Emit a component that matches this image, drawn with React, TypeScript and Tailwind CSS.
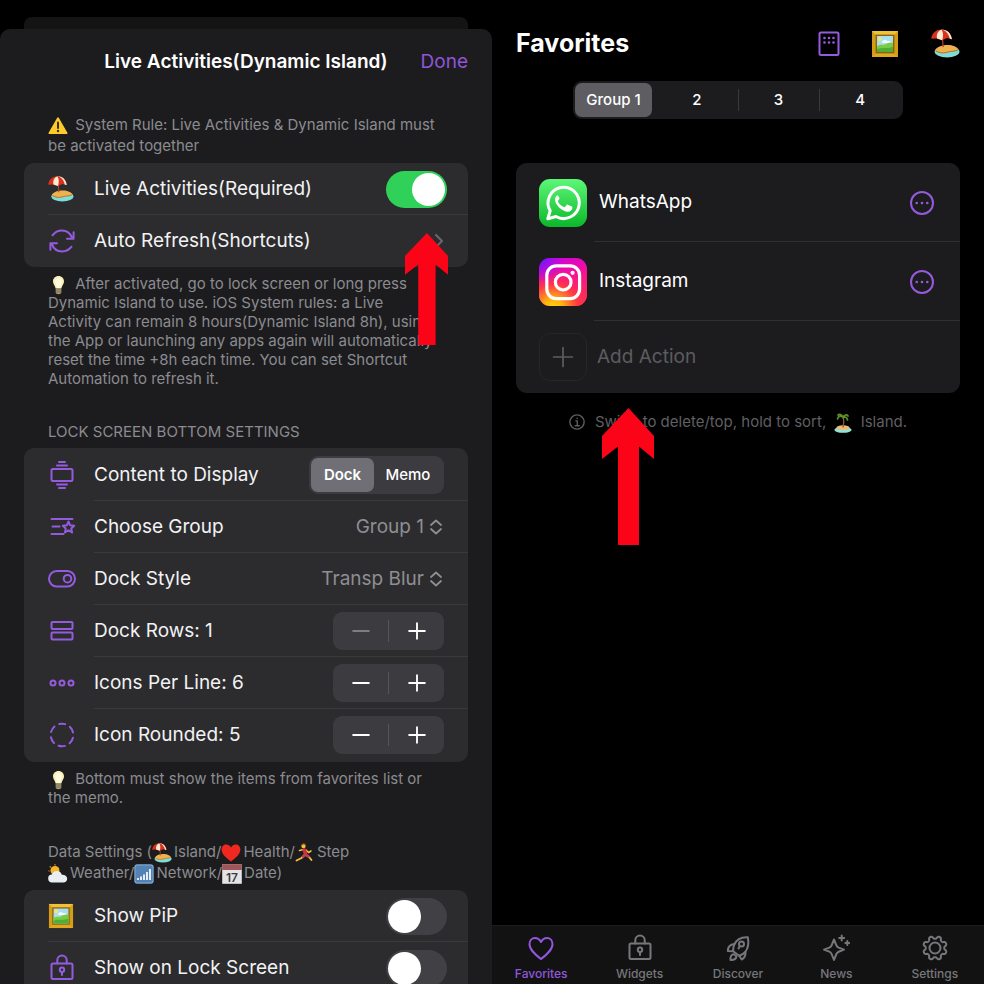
import React from "react";

type IconProps = { className?: string };

function Line({ className = "size-7", width = 2, children }: IconProps & { width?: number; children: React.ReactNode }) {
  return (
    <svg
      viewBox="0 0 28 28"
      className={`${className} shrink-0`}
      fill="none"
      stroke="currentColor"
      strokeWidth={width}
      strokeLinecap="round"
      strokeLinejoin="round"
      aria-hidden="true"
    >
      {children}
    </svg>
  );
}

/* ---------- emoji drawings ---------- */

const inlineEmoji = "-my-1 inline-block size-5";

function BeachEmoji({ className = "size-[26px]" }: IconProps) {
  return (
    <svg viewBox="0 0 28 28" className={`${className} shrink-0`} aria-hidden="true">
      <ellipse cx="15.5" cy="22" rx="12" ry="5.4" fill="#7fdcd6" />
      <path d="M4 20.5c2-3.5 7-5 12-5s9.500 2 10.500 4.500c-3 2.500-7 1.500-10.500 3-4 1.200-9 .5-12-2.500Z" fill="#efb14e" />
      <path d="M4.500 21c4 2.500 8 2.500 12 1.200 3-1 6.500-.3 9.500-2" fill="none" stroke="#8a5a2b" strokeWidth=".7" />
      <path d="m10.500 2 1.200 15.500" stroke="#b0402c" strokeWidth="1.200" />
      <path d="M.3 9.300C.8 3.600 5.200.4 10.200.4S19.400 4 20.200 9.800l-4.700-1.200-4.700 2.200-5-1.700Z" fill="#d9301f" />
      <path d="M10.200.4C6.500 2 5 5 5.800 9.100l5 1.700C12 7 12 3.500 10.200.4Z" fill="#fbead0" />
      <path d="M10.200.4c4.300 1.100 6.800 4.100 8 8.900l2 .5C19.400 4 15.500.4 10.200.4Z" fill="#fbead0" />
    </svg>
  );
}

function PictureEmoji({ className = "size-[26px]" }: IconProps) {
  return (
    <svg viewBox="0 0 28 28" className={`${className} shrink-0`} aria-hidden="true">
      <rect x="1" y="1" width="26" height="26" fill="#d59d16" />
      <path d="M1 1 5.500 5.500h17L27 1Z" fill="#f0c23a" />
      <path d="m27 27-4.500-4.500h-17L1 27Z" fill="#e0a81f" />
      <rect x="4.600" y="4.600" width="18.800" height="18.800" fill="#8c6212" />
      <rect x="6" y="6" width="16" height="16" fill="#a7dff0" />
      <circle cx="8.800" cy="9" r="2" fill="#f6e36a" />
      <path d="M11 12c1-2.500 4-3 5-1 2-.8 4 0 4.500 2H11Z" fill="#eefafc" />
      <path d="M6 16c4-2.500 6-.5 8-1.500s5-3 8-1.500v9H6Z" fill="#7ccb45" />
      <path d="M6 19c5-2 10 0 16-2v5H6Z" fill="#4fae33" />
    </svg>
  );
}

function WarningEmoji() {
  return (
    <svg viewBox="0 0 20 20" className={`${inlineEmoji} mr-[3px]`} aria-hidden="true">
      <path d="M10 2.200 18.600 17.200H1.400Z" fill="#fccb2b" stroke="#fccb2b" strokeWidth="1.800" strokeLinejoin="round" />
      <path d="M10 6.500v5.500" stroke="#3b2d08" strokeWidth="2" strokeLinecap="round" />
      <circle cx="10" cy="15" r="1.200" fill="#3b2d08" />
    </svg>
  );
}

function BulbEmoji() {
  return (
    <svg viewBox="0 0 20 20" className={`${inlineEmoji} mr-[3px]`} aria-hidden="true">
      <path d="M10.500 1c3.300 0 5.500 2.400 5.500 5.500 0 2.600-2 4-2.700 7H7.700C7 10.500 5 9.100 5 6.500 5 3.400 7.200 1 10.500 1Z" fill="#fbf0b4" />
      <path d="M10.500 3c2 0 3.300 1.500 3.300 3.500S12.500 9.500 12 13H9c-.5-3.500-1.800-4.500-1.800-6.500S8.500 3 10.500 3Z" fill="#fffbe2" />
      <path d="M7.700 13.500h5.600v3.700c0 1.300-1 2-2.800 2s-2.800-.7-2.800-2Z" fill="#a79a72" />
      <path d="M7.700 15h5.600M7.700 17h5.600" stroke="#6e664c" strokeWidth=".7" />
    </svg>
  );
}

function HeartEmoji() {
  return (
    <svg viewBox="0 0 20 20" className={`${inlineEmoji} mr-0.5`} aria-hidden="true">
      <path d="M10 18.500C6 15.500.6 11.500.6 6.600.6 3.600 2.700 1.500 5.200 1.500c2 0 3.700 1 4.800 3 1.100-2 2.800-3 4.800-3 2.500 0 4.600 2.100 4.600 5.100 0 4.900-5.400 8.900-9.400 11.900Z" fill="#f0281f" />
    </svg>
  );
}

function RunnerEmoji() {
  return (
    <svg viewBox="0 0 20 20" className={`${inlineEmoji} mr-0.5`} fill="none" strokeLinecap="round" strokeLinejoin="round" aria-hidden="true">
      <circle cx="8.500" cy="3" r="2.200" fill="#f3c13a" />
      <path d="M7 1.500c.8-1.200 3-1.200 3.500.2" stroke="#6b3b17" strokeWidth="1.200" />
      <path d="M9.500 12 6.500 15 1.500 17.500M11 12l3.500 2.500 2 2.500" stroke="#f3c13a" strokeWidth="1.800" />
      <path d="M8.500 6.500 4.500 7.500M11 7l2.500 2.500L16 8" stroke="#f3c13a" strokeWidth="1.500" />
      <path d="m9.300 7 1 3.200" stroke="#d12f3c" strokeWidth="3.600" />
      <path d="m10 12-2 1.800M11.500 12l2 1.500" stroke="#c43a55" strokeWidth="2.400" />
    </svg>
  );
}

function WeatherEmoji() {
  return (
    <svg viewBox="0 0 20 20" className={`${inlineEmoji} mr-0.5`} aria-hidden="true">
      <circle cx="7" cy="6.500" r="4.500" fill="#f8b52a" />
      <path d="M7 .3v1.200M1.800 2.500l.9.900M.5 7h1" stroke="#f8b52a" strokeWidth="1.100" />
      <path d="M4.500 18.500a4 4 0 0 1-.6-8c.8-2.200 2.600-3.500 4.900-3.500 2.600 0 4.500 1.600 5 3.700 3 0 5.400 1.500 5.400 4.100 0 2.200-1.700 3.700-4 3.700Z" fill="#e9eef3" />
    </svg>
  );
}

function SignalEmoji() {
  return (
    <svg viewBox="0 0 20 20" className={`${inlineEmoji} mr-0.5`} aria-hidden="true">
      <rect x=".3" y=".3" width="19.400" height="19.400" rx="3" fill="#7ea6cd" />
      <rect x="1.500" y="1.500" width="17" height="17" rx="2" fill="#5383b5" />
      <path d="M4 16v-2M7 16v-3.500M10 16v-5.500M13 16V8M16 16V5" stroke="#fff" strokeWidth="1.700" />
    </svg>
  );
}

function CalendarEmoji() {
  return (
    <svg viewBox="0 0 20 20" className={`${inlineEmoji} mr-0.5`} aria-hidden="true">
      <rect x=".2" y=".2" width="19.600" height="19.600" fill="#e4e4e6" />
      <rect x=".2" y=".2" width="19.600" height="5.800" fill="#a05559" />
      <text x="10" y="17.500" textAnchor="middle" fontSize="12" fontFamily="Inter, sans-serif" fontWeight="600" fill="#3c3c3e">17</text>
    </svg>
  );
}

function IslandEmoji() {
  return (
    <svg viewBox="0 0 20 20" className={`${inlineEmoji} mx-[3px]`} aria-hidden="true">
      <ellipse cx="10" cy="16.800" rx="8.600" ry="3" fill="#8fe3dc" />
      <ellipse cx="10" cy="14.800" rx="6.600" ry="2.500" fill="#eebb74" />
      <path d="M10.300 4c.8 3.500.6 7-.3 10.500" fill="none" stroke="#8b5a33" strokeWidth="1.300" />
      <path d="M10 4.500C8 2.500 5.500 2.500 4.500 6M10 4C8.500 1.300 6.500 1 5 2M10 4c1.500-2.500 4-2.500 5-1M10 4.500c2-1 4-.5 4.500 2.500" fill="none" stroke="#5f8f26" strokeWidth="1.700" strokeLinecap="round" />
    </svg>
  );
}

/* ---------- line icons ---------- */

const RefreshIcon = () => (
  <Line>
    <path d="M4.500 8.300C7 5 10.300 3.500 14 3.500c4.500 0 8.300 2.700 10.300 7.500M25.600 5.200v6.600h-6.600" />
    <path d="M23.500 19.700c-2.500 3.300-5.800 4.800-9.500 4.800-4.500 0-8.300-2.700-10.300-7.500M2.400 22.800v-6.600H9" />
  </Line>
);
const DisplayIcon = () => (
  <Line>
    <rect x="3.500" y="8" width="21" height="12" rx="1.500" />
    <path d="M11 1h6M9 4.600h10M9 23.400h10M11 27h6" />
  </Line>
);
const ListStarIcon = () => (
  <Line>
    <path d="M3.500 6h21M4.500 13.500h7M3.500 21h12" />
    <path d="m20.500 8.500 1.700 3.800 4 .4-3 2.700.9 4-3.600-2.100-3.600 2.100.9-4-3-2.700 4-.4Z" />
  </Line>
);
const ToggleIcon = () => (
  <Line>
    <rect x="1" y="6" width="26" height="15.500" rx="7.750" />
    <circle cx="19.500" cy="13.700" r="3.800" />
  </Line>
);
const RowsIcon = () => (
  <Line>
    <rect x="3.500" y="5" width="21" height="7" rx="1" />
    <rect x="3.500" y="15.500" width="21" height="7" rx="1" />
  </Line>
);
const DotsIcon = () => (
  <Line>
    <circle cx="5" cy="14" r="2.500" />
    <circle cx="14" cy="14" r="2.500" />
    <circle cx="23" cy="14" r="2.500" />
  </Line>
);
const DashedIcon = () => (
  <Line>
    <circle cx="14" cy="14" r="11.300" strokeDasharray="6.500 5.330" strokeDashoffset="3.250" transform="rotate(-90 14 14)" />
  </Line>
);
const LockIcon = () => (
  <Line>
    <rect x="3.500" y="9.500" width="21" height="15.500" rx="1.500" />
    <path d="M9.300 9.500V6.200a4.700 4.700 0 0 1 9.400 0v3.300M14 18v3" />
    <circle cx="14" cy="15.700" r="2.200" />
  </Line>
);
const KeypadIcon = () => (
  <Line>
    <rect x="4.500" y="2.500" width="19" height="22.500" rx="1.500" />
    <g fill="currentColor" stroke="none">
      <circle cx="9.500" cy="8" r="1.300" />
      <circle cx="14" cy="8" r="1.300" />
      <circle cx="18.500" cy="8" r="1.300" />
      <circle cx="9.500" cy="12.500" r="1.300" />
      <circle cx="14" cy="12.500" r="1.300" />
      <circle cx="18.500" cy="12.500" r="1.300" />
    </g>
  </Line>
);
const MoreIcon = () => (
  <Line>
    <circle cx="14" cy="14" r="11" />
    <g fill="currentColor" stroke="none">
      <circle cx="8.700" cy="14" r="1.300" />
      <circle cx="14" cy="14" r="1.300" />
      <circle cx="19.300" cy="14" r="1.300" />
    </g>
  </Line>
);
const HeartIcon = () => (
  <Line>
    <path d="M14 25C9 21 2.500 16 2.500 10.200 2.500 6.500 5 4 8 4c2.500 0 4.700 1.500 6 4 1.300-2.500 3.500-4 6-4 3 0 5.500 2.500 5.500 6.200C25.500 16 19 21 14 25Z" />
  </Line>
);
const RocketIcon = () => (
  <Line>
    <path d="M23.800 3.200C17.500 2.800 12.500 5.500 10.300 10.500 9.300 13 9 15.500 9.200 17.300l6 4.400c2-.4 4.300-1.700 6-3.700 3-3.800 3.800-8.800 2.600-14.800Z" />
    <path d="M10.500 10C6.500 10.500 3.800 13 3.800 17l5.400.3M21.500 18c.2 3.500-1 6-3.800 7.500l-2.500-3.800" />
    <path d="M10 20.300c-2.700.2-4 2.200-3.400 5.700 3.400.2 5.400-1 5.900-3.800Z" />
    <circle cx="17.500" cy="10" r="2.500" />
    <path d="m15.800 12-1.300 2.500" />
  </Line>
);
const SparkleIcon = () => (
  <Line>
    <path d="m12 5.500 2.400 5.800c.5 1.200 1.100 1.800 2.300 2.300l5.300 2-5.300 2.100c-1.200.5-1.800 1.100-2.300 2.300L12 26l-2.400-6c-.5-1.200-1.100-1.800-2.300-2.300L2 15.600l5.300-2c1.200-.5 1.800-1.100 2.300-2.300Z" />
    <path d="M19.700 1.500v5M17.200 4h5M25.300 7v4M23.300 9h4" />
  </Line>
);

const gearPath =
  Array.from({ length: 128 }, (_, i) => {
    const angle = (i / 128) * Math.PI * 2;
    const radius = 10.6 + 1.4 * Math.tanh(1.8 * Math.cos(8 * angle + Math.PI));
    const x = (14 + radius * Math.sin(angle)).toFixed(2);
    const y = (14 - radius * Math.cos(angle)).toFixed(2);
    return `${i === 0 ? "M" : "L"}${x} ${y}`;
  }).join("") + "Z";

const GearIcon = () => (
  <Line>
    <path d={gearPath} />
    <circle cx="14" cy="14" r="5.500" />
  </Line>
);

/* ---------- app logos ---------- */

function WhatsAppLogo() {
  return (
    <svg viewBox="0 0 48 48" className="size-12 shrink-0" aria-hidden="true">
      <defs>
        <linearGradient id="wa" x1="0" y1="0" x2="0" y2="1">
          <stop offset="0" stopColor="#5df777" />
          <stop offset="1" stopColor="#0bb82a" />
        </linearGradient>
      </defs>
      <rect width="48" height="48" rx="11" fill="url(#wa)" />
      <path d="M8.800 39.800 11.200 31.800A15.600 15.600 0 1 1 17 37.500Z" fill="none" stroke="#fff" strokeWidth="3" strokeLinejoin="round" />
      <path d="M18.700 16.200c-.8 0-2.700 1.500-2.700 4.300 0 5.500 7.500 12.200 12.800 12.200 2.700 0 4.600-1.700 4.600-4 0-.7-.1-.9-.6-1.100l-4-1.900c-.6-.2-.9-.1-1.300.4l-1.300 1.700c-.4.400-.8.500-1.400.2-2.700-1.200-4.500-3-5.800-5.300-.3-.5-.2-.9.200-1.300l1.100-1.300c.3-.4.300-.8.100-1.200l-1.300-2.100c-.2-.4-.3-.6-.4-.6Z" fill="#fff" />
    </svg>
  );
}

function InstagramLogo() {
  return (
    <svg viewBox="0 0 48 48" className="size-12 shrink-0" aria-hidden="true">
      <defs>
        <linearGradient id="igBase" x1="0" y1="0" x2="0.300" y2="1">
          <stop offset="0" stopColor="#c800e8" />
          <stop offset="0.500" stopColor="#f5119a" />
          <stop offset="1" stopColor="#ff2f52" />
        </linearGradient>
        <radialGradient id="igWarm" cx="0.300" cy="1.050" r="0.850">
          <stop offset="0" stopColor="#ffd60a" />
          <stop offset="0.250" stopColor="#ffb013" />
          <stop offset="0.600" stopColor="#ff3d3d" stopOpacity="0.850" />
          <stop offset="1" stopColor="#ff1080" stopOpacity="0" />
        </radialGradient>
        <radialGradient id="igCool" cx="0" cy="0" r="0.550">
          <stop offset="0" stopColor="#5a1cff" />
          <stop offset="1" stopColor="#a010f0" stopOpacity="0" />
        </radialGradient>
      </defs>
      <rect width="48" height="48" rx="11" fill="url(#igBase)" />
      <rect width="48" height="48" rx="11" fill="url(#igWarm)" />
      <rect width="48" height="48" rx="11" fill="url(#igCool)" />
      <g fill="none" stroke="#fff" strokeWidth="3.200">
        <rect x="7.800" y="7.800" width="32.800" height="32.800" rx="9.500" />
        <circle cx="24.200" cy="24.200" r="7.800" />
      </g>
      <circle cx="33.600" cy="14.800" r="2.100" fill="#fff" />
    </svg>
  );
}

/* ---------- controls ---------- */

function Toggle({ id, on = false }: { id: string; on?: boolean }) {
  return (
    <input
      id={id}
      type="checkbox"
      role="switch"
      defaultChecked={on}
      className="-mr-[3px] h-[37px] w-[61px] shrink-0 cursor-pointer appearance-none rounded-full bg-[#414145] p-0.5 before:block before:size-[33px] before:rounded-full before:bg-white checked:bg-[#30d158] checked:before:translate-x-6"
    />
  );
}

function Segments({ name, label, options, className, itemClass }: { name: string; label: string; options: string[]; className: string; itemClass: string }) {
  return (
    <div role="radiogroup" aria-label={label} className={`flex h-[38px] rounded-[9px] p-0.5 ${className}`}>
      {options.map((option, i) => (
        <label
          key={option}
          className={`relative flex flex-1 cursor-pointer items-center justify-center rounded-[7px] text-[15px] font-medium text-white ${itemClass}`}
        >
          <input type="radio" name={name} defaultChecked={i === 0} className="absolute inset-0 cursor-pointer appearance-none" />
          {option}
        </label>
      ))}
    </div>
  );
}

function Stepper({ label, atMinimum = false }: { label: string; atMinimum?: boolean }) {
  return (
    <div className="flex h-[38px] w-[111px] items-center rounded-[9px] bg-[#3b3b40] text-white">
      <button type="button" aria-label={`Decrease ${label}`} disabled={atMinimum} className="flex h-full flex-1 items-center justify-center disabled:text-[#7d7d82]">
        <Line className="size-5" width={2.6}>
          <path d="M3 14h22" />
        </Line>
      </button>
      <span className="h-[22px] w-px bg-[#55555a]" />
      <button type="button" aria-label={`Increase ${label}`} className="flex h-full flex-1 items-center justify-center">
        <Line className="size-5" width={2.6}>
          <path d="M3 14h22M14 3v22" />
        </Line>
      </button>
    </div>
  );
}

function Picker({ id, options }: { id: string; options: string[] }) {
  return (
    <div className="flex items-center gap-1 text-[#8e8e93]">
      <select id={id} className="cursor-pointer appearance-none bg-transparent text-right text-[19px] [field-sizing:content]">
        {options.map((option) => (
          <option key={option}>{option}</option>
        ))}
      </select>
      <svg viewBox="0 0 16 16" className="size-4" fill="none" stroke="currentColor" strokeWidth="1.800" strokeLinecap="round" strokeLinejoin="round" aria-hidden="true">
        <path d="M3 6 8 1.500 13 6M3 10l5 4.500 5-4.500" />
      </svg>
    </div>
  );
}

function Row({ icon, label, htmlFor, rule = "none", children }: { icon: React.ReactNode; label: string; htmlFor?: string; rule?: "none" | "full" | "text"; children?: React.ReactNode }) {
  return (
    <div className="relative flex h-[52px] items-center px-6">
      <span className="mr-[18px] flex w-7 text-[#955bdf]">{icon}</span>
      {htmlFor ? (
        <label htmlFor={htmlFor} className="flex-1 text-[19px] text-[#f2f2f4]">{label}</label>
      ) : (
        <span className="flex-1 text-[19px] text-[#f2f2f4]">{label}</span>
      )}
      {children}
      {rule === "full" && <span className="absolute right-0 bottom-0 left-6 h-px bg-[#3a3a3d]" />}
      {rule === "text" && <span className="absolute right-0 bottom-0 left-[70px] h-px bg-[#3a3a3d]" />}
    </div>
  );
}

function RedArrow({ className }: { className: string }) {
  return (
    <svg viewBox="0 0 52 137" preserveAspectRatio="none" className={`pointer-events-none absolute ${className}`} aria-hidden="true">
      <path d="M26.500 0 52 28v23L37 38.500V137H16V38.500L0 51V28Z" fill="#fb0418" />
    </svg>
  );
}

/* ---------- screens ---------- */

function LiveActivities() {
  return (
    <section className="flex min-w-0 flex-col overflow-hidden pt-[17px]">
      <div className="mx-6 h-3 shrink-0 rounded-t-lg bg-[#141415]" />
      <div className="flex-1 rounded-t-[10px] bg-[#1c1c1e] px-6">
        <header className="grid h-[67px] grid-cols-[1fr_auto_1fr] items-center text-[19px]">
          <h1 className="col-start-2 font-semibold whitespace-nowrap text-white">Live Activities(Dynamic Island)</h1>
          <button type="button" className="justify-self-end text-[#8f55dc]">Done</button>
        </header>

        <p className="mt-[18px] px-6 text-[15px] leading-[21px] whitespace-nowrap text-[#8b8b90]">
          <WarningEmoji /> System Rule: Live Activities &amp; Dynamic Island must
          <br />
          be activated together
        </p>
        <div className="relative mt-[7px] rounded-[10px] bg-[#2c2c2e]">
          <Row icon={<BeachEmoji />} label="Live Activities(Required)" htmlFor="live" rule="full">
            <Toggle id="live" on />
          </Row>
          <button type="button" className="block w-full text-left">
            <Row icon={<RefreshIcon />} label="Auto Refresh(Shortcuts)">
              <svg viewBox="0 0 10 16" className="h-4 w-2.5" fill="none" stroke="#66666b" strokeWidth="2.200" strokeLinecap="round" strokeLinejoin="round" aria-hidden="true">
                <path d="m2 2 6 6-6 6" />
              </svg>
            </Row>
          </button>
          <RedArrow className="top-[70px] right-5 h-[112px] w-[43px]" />
        </div>
        <p className="mt-[7px] px-6 text-[15px] leading-[19px] whitespace-nowrap text-[#8b8b90]">
          <BulbEmoji /> After activated, go to lock screen or long press
          <br />
          Dynamic Island to use. iOS System rules: a Live
          <br />
          Activity can remain 8 hours(Dynamic Island 8h), using
          <br />
          the App or launching any apps again will automatically
          <br />
          reset the time +8h each time. You can set Shortcut
          <br />
          Automation to refresh it.
        </p>

        <h2 className="mt-[34px] px-6 text-[15px] leading-[19px] text-[#8b8b90]">LOCK SCREEN BOTTOM SETTINGS</h2>
        <div className="mt-[7px] rounded-[10px] bg-[#2c2c2e] py-px">
          <Row icon={<DisplayIcon />} label="Content to Display" rule="text">
            <Segments
              name="content"
              label="Content to Display"
              options={["Dock", "Memo"]}
              className="w-[135px] bg-[#3b3b40]"
              itemClass="has-checked:w-[63px] has-checked:flex-none has-checked:bg-[#6f6f75] has-checked:font-semibold"
            />
          </Row>
          <Row icon={<ListStarIcon />} label="Choose Group" htmlFor="group" rule="text">
            <Picker id="group" options={["Group 1", "Group 2", "Group 3", "Group 4"]} />
          </Row>
          <Row icon={<ToggleIcon />} label="Dock Style" htmlFor="style" rule="text">
            <Picker id="style" options={["Transp Blur"]} />
          </Row>
          <Row icon={<RowsIcon />} label="Dock Rows: 1" rule="text">
            <Stepper label="Dock Rows" atMinimum />
          </Row>
          <Row icon={<DotsIcon />} label="Icons Per Line: 6" rule="text">
            <Stepper label="Icons Per Line" />
          </Row>
          <Row icon={<DashedIcon />} label="Icon Rounded: 5">
            <Stepper label="Icon Rounded" />
          </Row>
        </div>
        <p className="mt-[7px] px-6 text-[15px] leading-[19px] whitespace-nowrap text-[#8b8b90]">
          <BulbEmoji /> Bottom must show the items from favorites list or
          <br />
          the memo.
        </p>

        <h2 className="mt-[34px] px-6 text-[15px] leading-[21px] whitespace-nowrap text-[#8b8b90]">
          Data Settings (<BeachEmoji className="-my-1 mr-0.5 inline-block size-5" />Island/<HeartEmoji />Health/<RunnerEmoji />Step
          <br />
          <WeatherEmoji />Weather/<SignalEmoji />Network/<CalendarEmoji />Date)
        </h2>
        <div className="mt-[7px] rounded-[10px] bg-[#2c2c2e]">
          <Row icon={<PictureEmoji />} label="Show PiP" htmlFor="pip" rule="full">
            <Toggle id="pip" />
          </Row>
          <Row icon={<LockIcon />} label="Show on Lock Screen" htmlFor="lock">
            <Toggle id="lock" />
          </Row>
        </div>
      </div>
    </section>
  );
}

const tabs = [
  { label: "Favorites", icon: <HeartIcon /> },
  { label: "Widgets", icon: <LockIcon /> },
  { label: "Discover", icon: <RocketIcon /> },
  { label: "News", icon: <SparkleIcon /> },
  { label: "Settings", icon: <GearIcon /> },
];

function Favorites() {
  return (
    <section className="flex min-w-0 flex-col">
      <header className="flex h-[81px] items-center px-6 pt-3 pb-1.5">
        <h1 className="flex-1 text-[25px] font-bold text-white">Favorites</h1>
        <div className="flex items-center text-[#955bdf]">
          <button type="button" aria-label="Keypad" className="mr-7 flex"><KeypadIcon /></button>
          <button type="button" aria-label="Pictures" className="mr-8 flex"><PictureEmoji className="size-7" /></button>
          <button type="button" aria-label="Island" className="flex"><BeachEmoji className="size-[29px]" /></button>
        </div>
      </header>
      <Segments
        name="favgroup"
        label="Group"
        options={["Group 1", "2", "3", "4"]}
        className="w-[330px] items-stretch self-center bg-[#1c1c1f]"
        itemClass="has-checked:mr-1 has-checked:w-[77px] has-checked:flex-none has-checked:bg-[#5d5d62] [&:nth-of-type(n+3)]:before:absolute [&:nth-of-type(n+3)]:before:left-0 [&:nth-of-type(n+3)]:before:h-[22px] [&:nth-of-type(n+3)]:before:w-px [&:nth-of-type(n+3)]:before:bg-[#3a3a3e]"
      />

      <div className="mx-6 mt-11 rounded-[11px] bg-[#1c1c1e]">
        {[
          { name: "WhatsApp", logo: <WhatsAppLogo /> },
          { name: "Instagram", logo: <InstagramLogo /> },
        ].map((app) => (
          <div key={app.name} className="relative flex h-[79px] items-center gap-3 pr-6 pl-[23px] text-[19px] text-white">
            {app.logo}
            <span className="flex-1">{app.name}</span>
            <button type="button" aria-label={`${app.name} options`} className="flex text-[#955bdf]"><MoreIcon /></button>
            <span className="absolute right-0 bottom-0 left-[78px] h-px bg-[#303033]" />
          </div>
        ))}
        <button type="button" className="flex h-[72px] w-full items-center gap-2.5 pr-6 pl-[23px] text-[19px] text-[#5c5c60]">
          <span className="flex size-12 items-center justify-center rounded-[11px] border border-[#262628]">
            <Line className="size-6" width={2}>
              <path d="M3 14h22M14 3v22" />
            </Line>
          </span>
          Add Action
        </button>
      </div>

      <div className="relative mt-[17px] flex items-center justify-center gap-2.5 text-[15px] leading-6 text-[#5f5f63]">
        <Line className="size-4" width={2.4}>
          <circle cx="14" cy="14" r="12.500" />
          <path d="M12 12h2.500v8M11 20.500h7M14 7.500h.3" />
        </Line>
        <span className="whitespace-nowrap">
          Swipe to delete/top, hold to sort, <IslandEmoji /> Island.
        </span>
        <RedArrow className="-top-0.5 left-[110px] h-[137px] w-[52px]" />
      </div>

      <nav className="mt-auto grid h-[59px] shrink-0 grid-cols-5 border-t border-[#1d1d1e] bg-[#121213]">
        {tabs.map((tab, i) => (
          <button
            key={tab.label}
            type="button"
            aria-current={i === 0 ? "page" : undefined}
            className="flex flex-col items-center gap-1 pt-2 text-xs leading-4 font-medium text-[#77777b] aria-[current=page]:text-[#9157dc]"
          >
            {tab.icon}
            {tab.label}
          </button>
        ))}
      </nav>
    </section>
  );
}

export default function App() {
  return (
    <main className="grid h-screen grid-cols-2 overflow-hidden bg-black font-[Inter,sans-serif]">
      <LiveActivities />
      <Favorites />
    </main>
  );
}
